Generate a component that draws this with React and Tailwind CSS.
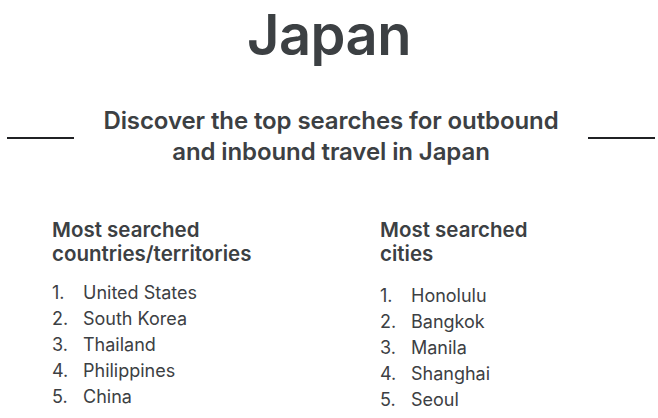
const countries = ['United States', 'South Korea', 'Thailand', 'Philippines', 'China'];
const cities = ['Honolulu', 'Bangkok', 'Manila', 'Shanghai', 'Seoul'];

function RankList({ items, className }) {
  return (
    <ol className={`text-[18px] leading-[26px] text-[#3c4043] ${className}`}>
      {items.map((name, i) => (
        <li key={name} className="flex">
          <span className="w-[31px] shrink-0">{i + 1}.</span>
          <span>{name}</span>
        </li>
      ))}
    </ol>
  );
}

export default function App() {
  return (
    <div className="w-[658px] h-[418px] overflow-hidden bg-white text-[#3c4043] font-['Inter','Open_Sans',sans-serif]">
      <h1 className="text-center text-[56px] leading-[66px] font-semibold tracking-[-0.5px] pt-[2px]">Japan</h1>

      <div className="flex items-start mt-[37px]">
        <div className="ml-[7px] mt-[32px] w-[67px] h-[2px] bg-[#202124]" />
        <h2 className="flex-1 text-center text-[24px] leading-[31px] font-semibold tracking-[-0.1px]">
          Discover the top searches for outbound<br />and inbound travel in Japan
        </h2>
        <div className="mr-[3px] mt-[32px] w-[67px] h-[2px] bg-[#202124]" />
      </div>

      <div className="flex mt-[51px] pl-[52px]">
        <div className="w-[328px]">
          <h3 className="text-[20.5px] leading-[24px] font-semibold">Most searched<br />countries/territories</h3>
          <RankList items={countries} className="mt-[14px]" />
        </div>
        <div>
          <h3 className="text-[20.5px] leading-[24px] font-semibold">Most searched<br />cities</h3>
          <RankList items={cities} className="mt-[17px]" />
        </div>
      </div>
    </div>
  );
}
